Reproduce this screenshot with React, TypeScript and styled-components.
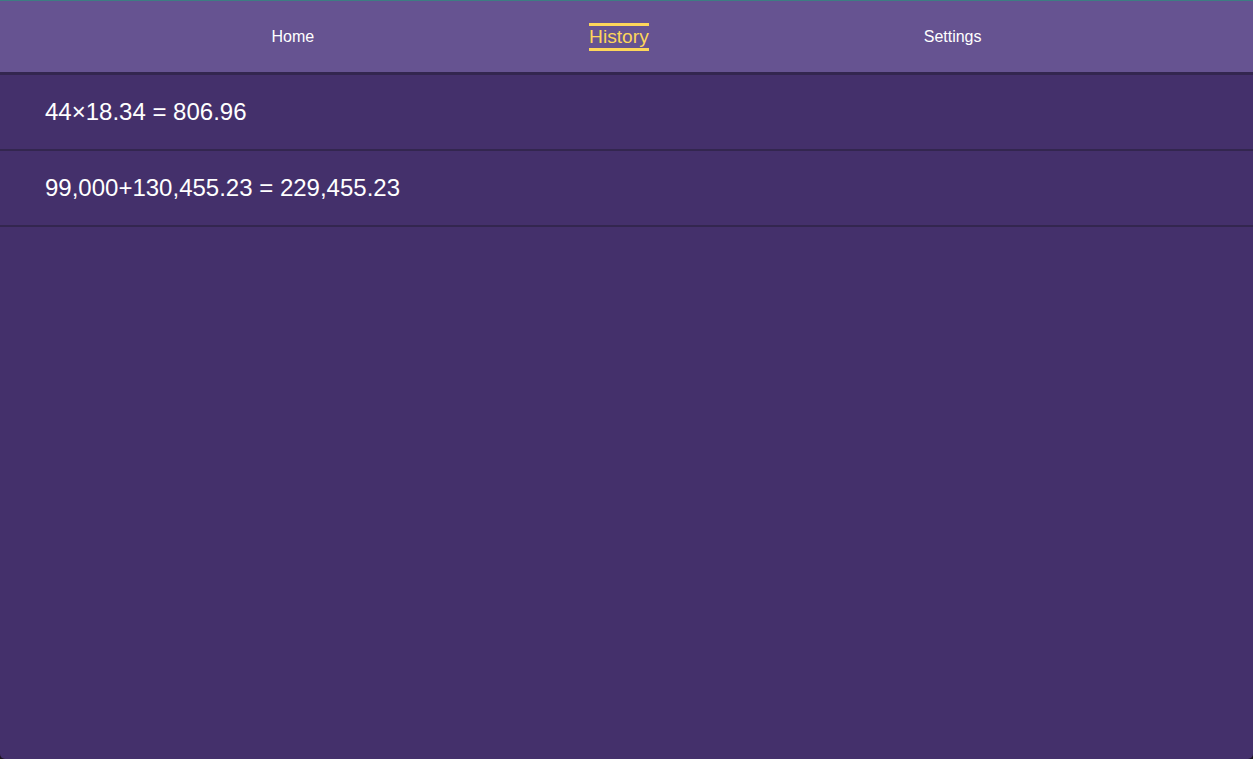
import React from "react";
import styled, { createGlobalStyle } from "styled-components";

const Global = createGlobalStyle`
  html, body {
    margin: 0;
    padding: 0;
    height: 100%;
    background: #1d1420;
  }
  #root { height: 100%; }
`;

const Window = styled.div`
  height: 759px;
  box-sizing: border-box;
  border-top: 1px solid #3d7d82;
  background: #44306b;
  border-radius: 0 0 5px 5px;
  overflow: hidden;
  font-family: "Liberation Sans", Arial, Helvetica, sans-serif;
  color: #ffffff;
  display: flex;
  flex-direction: column;
`;

const NavBar = styled.nav`
  height: 71px;
  background: #665391;
  border-bottom: 3px solid #33264f;
  display: flex;
  align-items: center;
  justify-content: space-evenly;
`;

const NavItem = styled.a<{ $active?: boolean }>`
  font-size: ${(p) => (p.$active ? "19.2px" : "16px")};
  line-height: ${(p) => (p.$active ? "22px" : "20px")};
  margin: ${(p) => (p.$active ? "1px 3.5px 0" : "0")};
  color: ${(p) => (p.$active ? "#fdd65a" : "#ffffff")};
  text-decoration: none;
  cursor: pointer;
  box-sizing: border-box;
  border-top: 3px solid ${(p) => (p.$active ? "#fdd65a" : "transparent")};
  border-bottom: 3px solid ${(p) => (p.$active ? "#fdd65a" : "transparent")};
`;

const List = styled.ul`
  list-style: none;
  margin: 0;
  padding: 0;
`;

const Row = styled.li`
  padding: 23px 45px;
  font-size: 24px;
  line-height: 28px;
  border-bottom: 2px solid #33264f;
  color: #ffffff;
`;

const history = [
  "44×18.34 = 806.96",
  "99,000+130,455.23 = 229,455.23",
];

export default function App() {
  return (
    <>
      <Global />
      <Window>
        <NavBar>
          <NavItem>Home</NavItem>
          <NavItem $active>History</NavItem>
          <NavItem>Settings</NavItem>
        </NavBar>
        <List>
          {history.map((h) => (
            <Row key={h}>{h}</Row>
          ))}
        </List>
      </Window>
    </>
  );
}
